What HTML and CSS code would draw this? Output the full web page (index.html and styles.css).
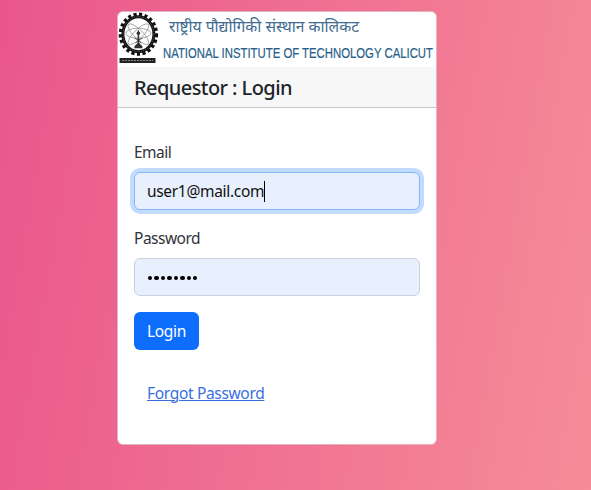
FILE: index.html
```
<!DOCTYPE html>
<html lang="en">
<head>
<meta charset="utf-8">
<title>Requestor : Login</title>
<link rel="stylesheet" href="styles.css">
</head>
<body>
<main class="card">
  <svg class="banner" viewBox="0 0 318 55" role="img" aria-label="National Institute of Technology Calicut">
    <g transform="translate(20.4 22.2)">
      <ellipse class="teeth" rx="17.7" ry="19.6"/>
      <ellipse class="rim" rx="15.5" ry="17.5"/>
      <ellipse class="rim-text" rx="15.4" ry="17.4"/>
      <g class="orbits">
        <ellipse rx="14" ry="4.5" transform="rotate(45)"/>
        <ellipse rx="14" ry="4.5" transform="rotate(-45)"/>
        <ellipse rx="12.5" ry="5" cy="-1"/>
      </g>
      <path class="tower" d="M-.6-4H.6L1 9 4 12V14H-4V12L-1 9Z"/>
      <path class="arms" d="M-4 4 0 6 4 4M-3 9 0 6 3 9"/>
      <circle class="core" cy="-1" r="1.8"/>
    </g>
    <rect class="plate" x="1.5" y="46" width="36" height="5"/>
    <path class="plate-text" d="M4 48.5H35"/>
    <text class="hindi" transform="translate(51 20) scale(1 1.1)" textLength="190" lengthAdjust="spacingAndGlyphs">राष्ट्रीय पौद्योगिकी संस्थान कालिकट</text>
    <text class="english" transform="translate(45 46) scale(1 1.32)" textLength="270" lengthAdjust="spacingAndGlyphs">NATIONAL INSTITUTE OF TECHNOLOGY CALICUT</text>
  </svg>
  <header class="card-header"><h1>Requestor : Login</h1></header>
  <form class="card-body">
    <label>Email</label>
    <div class="field focused"><span class="email-value">user1@mail.com</span><span class="caret"></span></div>
    <label>Password</label>
    <div class="field"><span class="dots"><i></i><i></i><i></i><i></i><i></i><i></i><i></i><i></i></span></div>
    <button type="button" class="login">Login</button>
    <a class="forgot" href="#">Forgot Password</a>
  </form>
</main>
</body>
</html>
```
FILE: styles.css
```
* { box-sizing: border-box; }
body {
  margin: 0;
  height: 490px;
  padding: 11px 0 0 117px;
  overflow: hidden;
  font: 16px/24px "Noto Sans", sans-serif;
  color: #212529;
  background: linear-gradient(100deg, #ea568c, #f68c98);
}
.card {
  width: 320px;
  height: 434px;
  border: 1px solid #e3b3c2;
  border-radius: 6px;
  background: #fff;
  overflow: hidden;
}
.banner { display: block; width: 318px; height: 55px; }
.teeth { fill: none; stroke: #111; stroke-width: 4; stroke-dasharray: 3.1 2.4; }
.rim { fill: #fff; stroke: #111; stroke-width: 3; }
.rim-text { fill: none; stroke: #888; stroke-width: .7; stroke-dasharray: 1 1.2; }
.orbits { fill: none; stroke: #888; stroke-width: .7; }
.tower { fill: #333; }
.arms { fill: none; stroke: #333; stroke-width: .8; }
.core { fill: #333; }
.plate { fill: #222; }
.plate-text { stroke: #888; stroke-width: 1.2; stroke-dasharray: 2 1; }
.hindi { font: 14.5px "Noto Sans", "Noto Sans Devanagari", sans-serif; fill: #426c91; }
.english { font: 11px "Liberation Sans", sans-serif; fill: #285e89; stroke: #285e89; stroke-width: .15; }
.card-header {
  height: 41px;
  padding: 9px 16px 7px;
  background: #f7f7f7;
  border-bottom: 1px solid #c8c8c8;
}
h1 { margin: 0; font-size: 20px; line-height: 24px; font-weight: 500; letter-spacing: -.57px; }
.card-body { display: flex; flex-direction: column; align-items: flex-start; padding: 32px 16px 0; }
label { font-size: 15.5px; letter-spacing: -.5px; margin-bottom: 8px; color: #303438; }
.field {
  display: flex;
  align-items: center;
  width: 286px;
  height: 38px;
  margin-bottom: 16px;
  padding: 0 12px;
  border: 1px solid #c9d1de;
  border-radius: 6px;
  background: #e8f0fe;
  color: #111;
}
.focused { border-color: #86b7fe; box-shadow: 0 0 0 4px #c2dbfe; }
.email-value { font-size: 15.5px; letter-spacing: -.32px; }
.caret { width: 1px; height: 21px; background: #000; }
.dots { display: flex; gap: 2.4px; padding: 2px 0 0 1px; }
.dots i { width: 4.1px; height: 4.1px; border-radius: 50%; background: #000; }
.login {
  width: 65px;
  height: 38px;
  padding: 0;
  border: 0;
  border-radius: 6px;
  background: #0d6efd;
  color: #fff;
  font: 15.5px/24px "Noto Sans", sans-serif;
  letter-spacing: -.3px;
}
.forgot { margin: 31px 0 0 13px; font-size: 15.5px; letter-spacing: -.33px; color: #386fe0; text-decoration-thickness: 1px; }
```
